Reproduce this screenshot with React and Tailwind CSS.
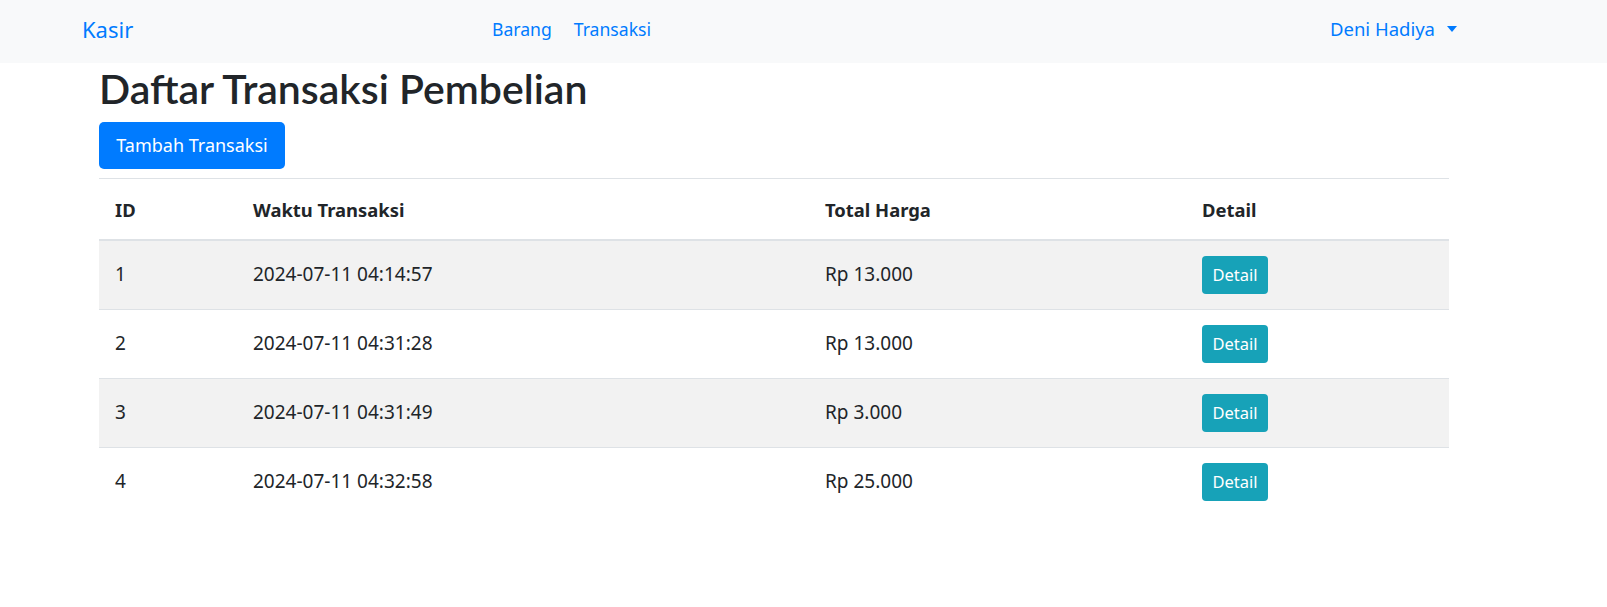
const ROWS = [
  { id: 1, time: '2024-07-11 04:14:57', total: 'Rp 13.000' },
  { id: 2, time: '2024-07-11 04:31:28', total: 'Rp 13.000' },
  { id: 3, time: '2024-07-11 04:31:49', total: 'Rp 3.000' },
  { id: 4, time: '2024-07-11 04:32:58', total: 'Rp 25.000' },
]

export default function App() {
  return (
    <div
      className="min-h-screen bg-white text-[#212529]"
      style={{ fontFamily: '"Noto Sans", "Open Sans", sans-serif' }}
    >
      {/* navbar */}
      <nav className="h-[63px] bg-[#f8f9fa] flex items-center pl-[82px] pr-[150px] pb-[6px] text-[#007bff]">
        <a className="w-[410px] text-[22px] leading-[30px]">Kasir</a>
        <div className="flex items-center gap-[22px] text-[17.6px] leading-[26px]">
          <a>Barang</a>
          <a>Transaksi</a>
        </div>
        <div className="ml-auto flex items-center text-[18.5px] leading-[26px]">
          <span>Deni Hadiya</span>
          <span className="ml-[12px] mt-[1px] w-0 h-0 border-t-[6px] border-t-[#007bff] border-x-[5.5px] border-x-transparent" />
        </div>
      </nav>

      <main className="pl-[99px] pr-[158px]">
        <h1
          className="mt-[2px] text-[41px] leading-[48px] font-semibold"
          style={{ fontFamily: 'Lato, "Noto Sans", sans-serif' }}
        >
          Daftar Transaksi Pembelian
        </h1>
        <button className="mt-[9px] h-[47px] w-[186px] flex items-center justify-center rounded-[5px] bg-[#007bff] text-white text-[18px]">
          Tambah Transaksi
        </button>

        <table className="mt-[9px] w-full border-collapse text-[19px] leading-[30px]">
          <thead>
            <tr className="border-t border-[#dee2e6] border-b-2 border-b-[#dee2e6] text-left text-[18.4px]">
              <th className="w-[138px] px-[16px] pt-[16px] pb-[14px] font-bold">ID</th>
              <th className="w-[572px] px-[16px] pt-[16px] pb-[14px] font-bold">Waktu Transaksi</th>
              <th className="w-[377px] px-[16px] pt-[16px] pb-[14px] font-bold">Total Harga</th>
              <th className="px-[16px] pt-[16px] pb-[14px] font-bold">Detail</th>
            </tr>
          </thead>
          <tbody>
            {ROWS.map((r, i) => (
              <tr
                key={r.id}
                className={`${i > 0 ? 'border-t border-[#dee2e6]' : ''} ${i % 2 === 0 ? 'bg-[#f2f2f2]' : 'bg-white'}`}
              >
                <td className="px-[16px] pt-[18px] pb-[12px] align-top">{r.id}</td>
                <td className="px-[16px] pt-[18px] pb-[12px] align-top">{r.time}</td>
                <td className="px-[16px] pt-[18px] pb-[12px] align-top">{r.total}</td>
                <td className="px-[16px] pt-[15px] pb-[15px] align-top">
                  <button className="h-[38px] w-[66px] flex items-center justify-center rounded-[4px] bg-[#17a2b8] text-white text-[16.5px]">
                    Detail
                  </button>
                </td>
              </tr>
            ))}
          </tbody>
        </table>
      </main>
    </div>
  )
}
